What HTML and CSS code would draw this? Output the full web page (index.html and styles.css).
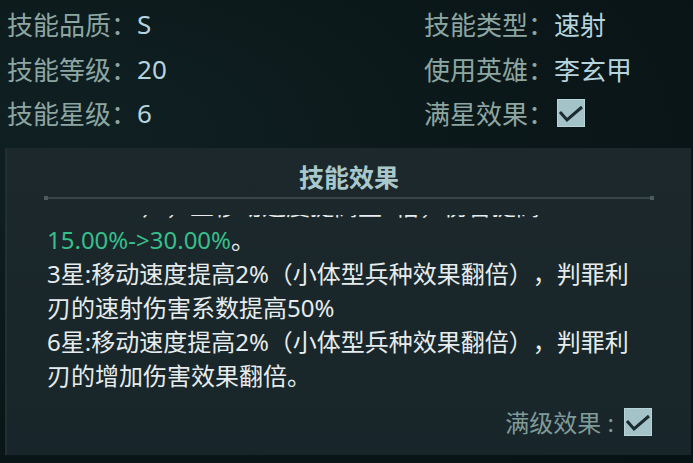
FILE: index.html
```html
<!DOCTYPE html>
<html lang="zh-CN">
<head>
<meta charset="UTF-8" />
<title>技能详情</title>
<link rel="stylesheet" href="styles.css">
</head>
<body>

  <div class="info-grid">
    <div class="info-row"><span class="info-label">技能品质：</span><span class="info-value">S</span></div>
    <div class="info-row"><span class="info-label">技能类型：</span><span class="info-value">速射</span></div>
    <div class="info-row"><span class="info-label">技能等级：</span><span class="info-value">20</span></div>
    <div class="info-row"><span class="info-label">使用英雄：</span><span class="info-value">李玄甲</span></div>
    <div class="info-row"><span class="info-label">技能星级：</span><span class="info-value">6</span></div>
    <div class="info-row">
      <span class="info-label">满星效果：</span>
      <span class="checkbox">
        <svg viewBox="0 0 28 28" width="28" height="28"><polyline points="3,13 10,21 25,8" /></svg>
      </span>
    </div>
  </div>

  <div class="effect-panel">
    <h2 class="effect-title">技能效果</h2>
    <div class="divider"></div>

    <div class="effect-scroll">
      <div class="effect-text">
        <p><span class="green">150.00%</span>），且移动速度提高至2倍，伤害提高<br><span class="green">15.00%-&gt;30.00%</span>。</p>
        <p>3星:移动速度提高2%（小体型兵种效果翻倍），判罪利<br>刃的速射伤害系数提高50%</p>
        <p>6星:移动速度提高2%（小体型兵种效果翻倍），判罪利<br>刃的增加伤害效果翻倍。</p>
      </div>
    </div>

    <div class="effect-footer">
      <span class="footer-label">满级效果 :</span>
      <span class="checkbox">
        <svg viewBox="0 0 28 28" width="28" height="28"><polyline points="3,13 10,21 25,8" /></svg>
      </span>
    </div>
  </div>

</body>
</html>
```

FILE: styles.css
```css
html, body {
  margin: 0;
  padding: 0;
  height: 100vh;
  background: radial-gradient(ellipse at 10% 30%, #102022 0%, #0a1618 60%, #071214 100%);
  font-family: 'Noto Sans', 'Noto Sans CJK SC', sans-serif;
  color: #e6eced;
  overflow: hidden;
  text-spacing-trim: space-all;
}

.info-grid {
  display: grid;
  grid-template-columns: 417px 1fr;
  padding: 2px 0 0 7px;
}

.info-row {
  display: flex;
  align-items: center;
  height: 44.5px;
  font-size: 26px;
}

.info-label {
  color: #8da6a2;
}

.info-value {
  color: #b5d4dd;
}

.checkbox {
  display: inline-flex;
  width: 28px;
  height: 28px;
  box-sizing: border-box;
  background: #a4c3c8;
  border: 1px solid #b9d4d8;
  margin-left: 3px;
}

.checkbox svg {
  display: block;
  margin: -1px;
}

.checkbox polyline {
  fill: none;
  stroke: #1b2b2f;
  stroke-width: 3;
}

.effect-panel {
  display: flex;
  flex-direction: column;
  height: 307px;
  margin: 12px 2px 0 5px;
  padding: 0 37px 19px 37px;
  box-sizing: border-box;
  background: linear-gradient(180deg, #1c282b 0%, #1a272a 60%, #18252a 100%);
  border-left: 2px solid #212f33;
}

.effect-title {
  margin: 13px 0 6px;
  text-align: center;
  font-family: 'Noto Sans CJK SC', sans-serif;
  font-size: 25px;
  line-height: 30px;
  font-weight: 700;
  color: #a8c8cc;
}

.divider {
  position: relative;
  height: 2px;
  background: #35454a;
}

.divider::before,
.divider::after {
  content: '';
  position: absolute;
  top: -1px;
  width: 4px;
  height: 4px;
  background: #4b5b5f;
}

.divider::before { left: 0; }
.divider::after { right: 0; }

.effect-scroll {
  flex: 1;
  overflow: hidden;
  margin-top: 16px;
}

.effect-text {
  margin-top: -26px;
  padding-left: 3px;
  font-size: 24px;
  line-height: 34px;
}

.effect-text p {
  margin: 0;
  white-space: nowrap;
}

.green {
  color: #36bf8b;
}

.effect-footer {
  display: flex;
  justify-content: flex-end;
  align-items: center;
  gap: 10px;
  height: 28px;
  margin-top: 6px;
  padding-right: 2px;
}

.footer-label {
  font-size: 24px;
  color: #7f9b98;
}

.effect-footer .checkbox {
  margin-left: 0;
}
```
